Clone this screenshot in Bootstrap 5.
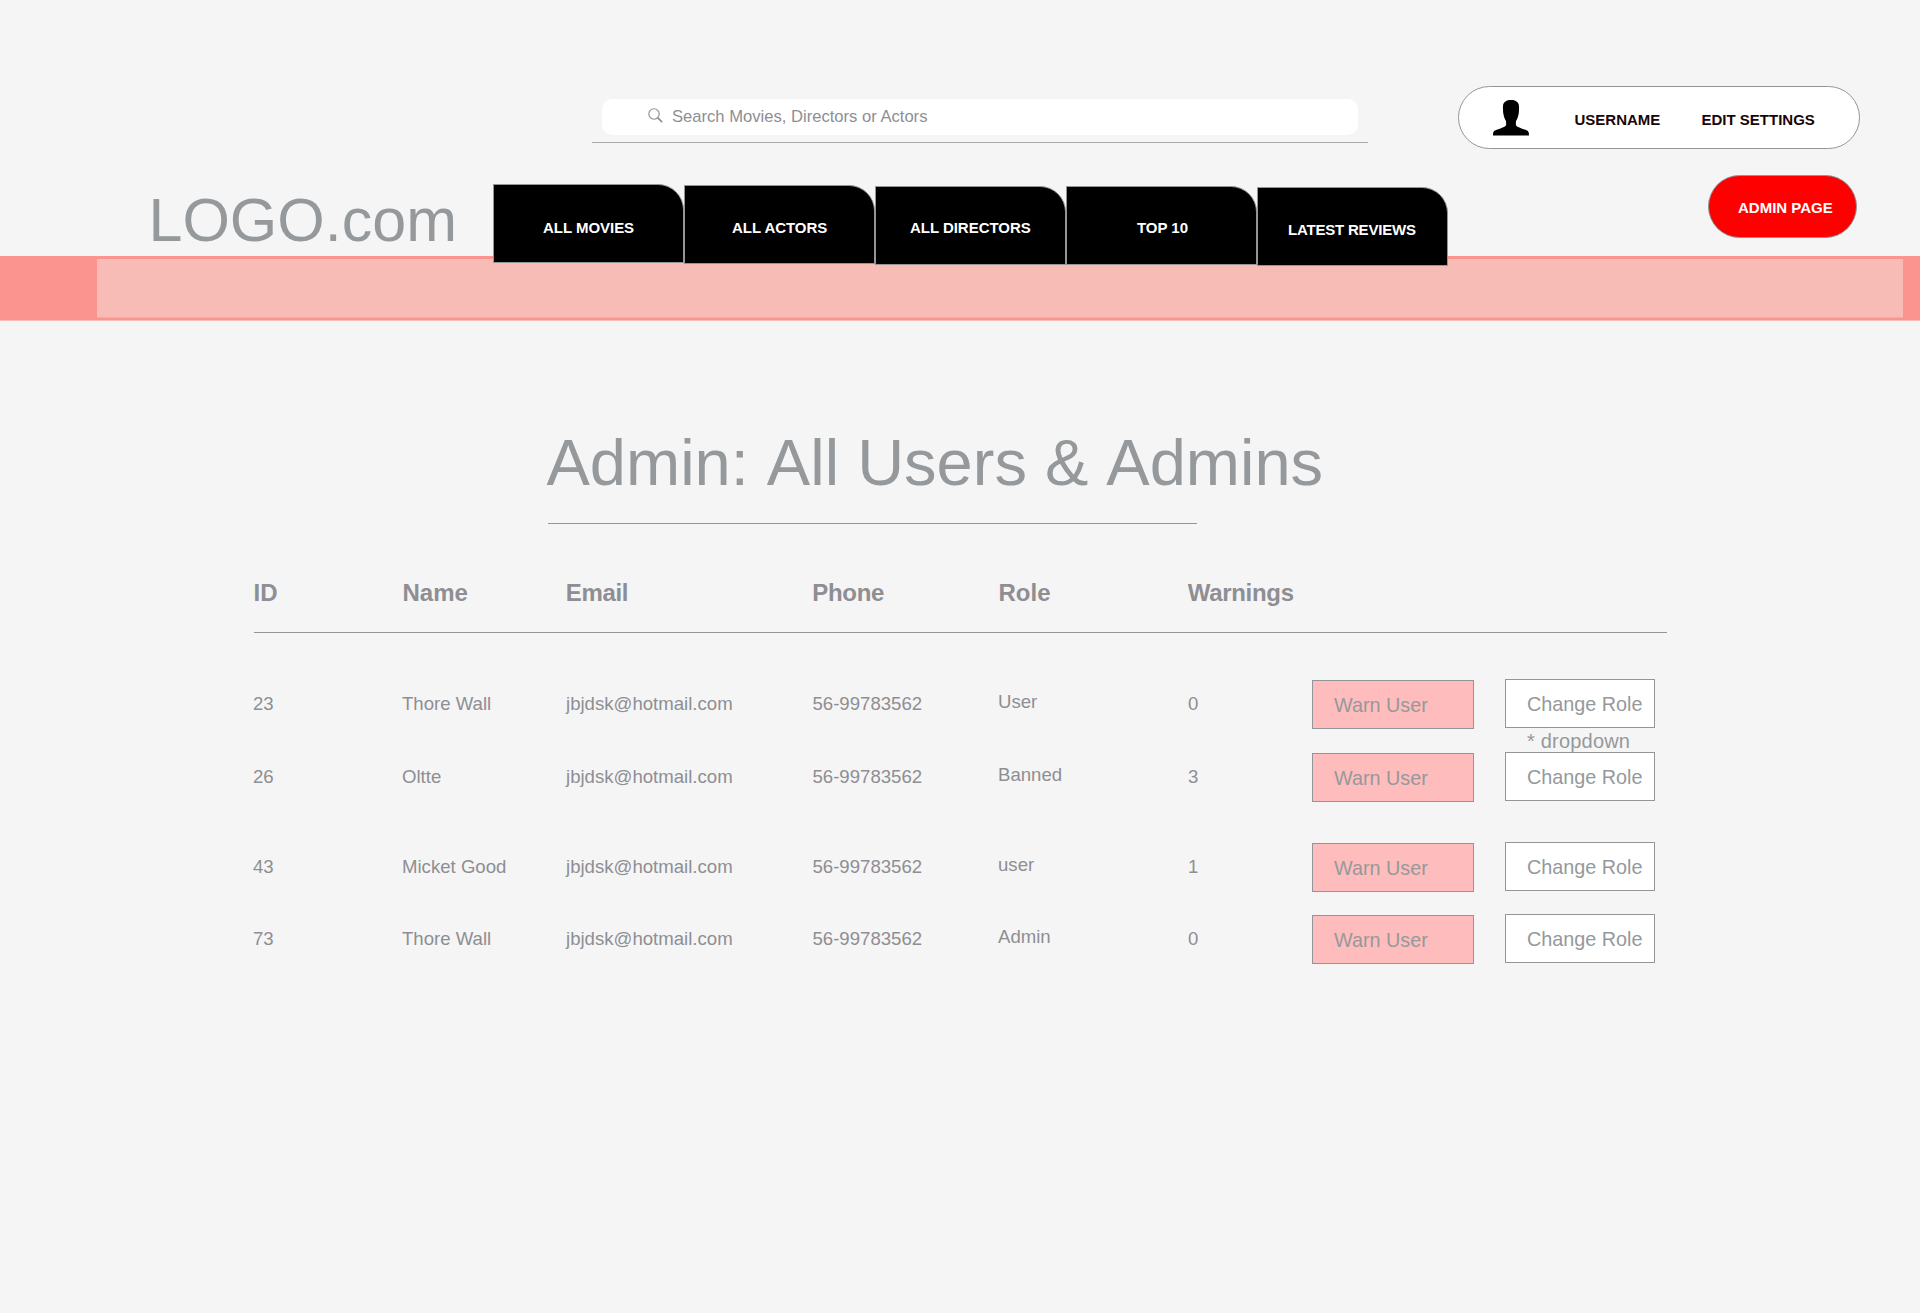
<!DOCTYPE html>
<html lang="en">
<head>
<meta charset="utf-8">
<meta name="viewport" content="width=device-width, initial-scale=1">
<title>Admin: All Users &amp; Admins</title>
<link rel="stylesheet" href="https://cdn.jsdelivr.net/npm/bootstrap@5.3.0/dist/css/bootstrap.min.css">
<style>
  body { background: #f5f5f5; font-family: "Liberation Sans", Arial, sans-serif; color: #8e8e93; min-height: 1313px; overflow-x: hidden; }
  .page { width: 1920px; }
  a { color: inherit; text-decoration: none; }
  .topline { padding: 86px 0 0 592px; height: 149px; }
  .search-wrap { width: 776px; height: 44px; margin-top: 13px; padding: 0 10px; border-bottom: 1px solid #a8a9aa; }
  .search-field { height: 36px; background: #fff; border-radius: 10px; padding-left: 46px; font-size: 16.6px; line-height: 35px; }
  .search-field svg { margin: 9px 9px 0 0; }
  .search-field input { border: 0; padding: 0; outline: 0; width: 500px; background: transparent; height: 35px; color: #8e8e93; }
  .search-field input::placeholder { color: #8e8e93; opacity: 1; }
  .user-pill { width: 402px; height: 63px; margin-left: 90px; padding-left: 34px; background: #fff; border: 1px solid #929698; font-size: 15px; color: #1a0506; line-height: 65px; }
  .user-pill svg { margin-top: 13px; }
  .user-pill .who { margin-left: 45.5px; width: 127px; }
  .midline { height: 107px; z-index: 2; }
  .brand { margin: 41px 0 0; padding-left: 148.5px; width: 493px; font-size: 61px; line-height: 60px; color: #95999b; white-space: nowrap; }
  .tabs { margin-top: 35px; }
  .tab { width: 191px; height: 79px; background: #000; color: #fff; border: 1px solid #929698; border-radius: 0 26px 0 0; font-size: 15px; letter-spacing: -.03px; line-height: 20px; padding-top: 33px; white-space: nowrap; }
  .tab-tight { letter-spacing: -.2px; }
  .admin-btn { width: 149px; height: 63px; margin: 26px 0 0 260px; padding: 0 0 0 29px; background: #f00; color: #fff; border: 1px solid #929698; font-size: 15px; line-height: 63px; }
  .band { height: 65px; background: #fb948e; border-bottom: 1px solid #f9bdb9; padding: 3px 17px 3px 96.7px; }
  .band-inner { height: 59px; background: #f8bcb7; border-bottom: 1px solid #f9a8a3; }
  .heading { margin: 103px 0 0 546.5px; font-size: 65px; font-kerning: none; line-height: 78px; color: #95999b; white-space: nowrap; }
  .heading-rule { margin: 21px 0 0 548px; width: 649px; height: 1px; background: #929698; }
  .users { margin: 51px 0 0 253px; width: 1414px; }
  .line-grid { display: grid; grid-template-columns: 149px 164px 246.5px 185.5px 190px 124px 193px 150px; }
  .users-head { font-size: 24px; font-weight: 700; line-height: 36px; height: 58px; margin-left: 1px; border-bottom: 1px solid #929698; }
  .users-head > div { margin-left: -.5px; }
  .users-head .tight { letter-spacing: -.3px; margin-left: -1.3px; }
  .user-line { height: 49px; font-size: 18.6px; line-height: 49px; margin-bottom: 24px; white-space: nowrap; }
  .role-cell { margin-top: -2px; }
  .act { height: 49px; border: 1px solid #929698; border-radius: 0; font-size: 19.8px; line-height: 48px; padding: 0 0 0 21px; text-align: left; color: #95999b; }
  .act-warn { width: 162px; margin-top: 1px; background: #ffbcbc; }
  .act-role { width: 150px; background: #fff; z-index: 1; }
  .hint { left: 22px; top: 50px; font-size: 20px; letter-spacing: .2px; line-height: 24px; color: #95999b; z-index: 0; }
</style>
<script src="https://cdn.jsdelivr.net/npm/bootstrap@5.3.0/dist/js/bootstrap.bundle.min.js"></script>
</head>
<body>
<div class="page">
  <header>
    <div class="topline d-flex align-items-start">
      <form class="search-wrap">
        <div class="search-field d-flex align-items-start">
          <svg width="15" height="15" viewBox="0 0 15 15" fill="none" stroke="#8e8e93" stroke-width="1.1"><circle cx="6" cy="6" r="5.2"/><path d="M9.8 9.8 13.700 13.700" stroke-width="1.7" stroke-linecap="round"/></svg>
          <input type="text" placeholder="Search Movies, Directors or Actors" aria-label="Search">
        </div>
      </form>
      <div class="user-pill rounded-pill d-flex align-items-start fw-bold">
        <svg width="36" height="36" viewBox="0 0 36 36" fill="#000"><path d="M18 0C22.300 0 25.700 1.800 26 6C26.100 8 26.100 9 25.900 10.500C26.100 11.500 25.800 13 25.500 14.500C24.900 17.300 24.100 19.300 23 21L22.800 25C24.500 27.700 29 28.300 33 30C35.500 31.200 36 32 36 35.500H0C0 32 .5 31.200 3 30C7 28.300 11.500 27.700 13.200 25L13 21C11.900 19.300 11.100 17.300 10.500 14.500C10.200 13 9.900 11.500 10.100 10.500C9.900 9 9.900 8 10 6C10.300 1.800 13.700 0 18 0Z"/></svg>
        <a class="who" href="#">USERNAME</a>
        <a href="#">EDIT SETTINGS</a>
      </div>
    </div>
    <div class="midline d-flex align-items-start position-relative">
      <div class="brand">LOGO.com</div>
      <nav class="tabs d-flex align-items-start fw-bold">
        <a class="tab" style="padding-left:49px" href="#">ALL MOVIES</a>
        <a class="tab" style="padding-left:47px;margin-top:1px;padding-top:32px" href="#">ALL ACTORS</a>
        <a class="tab" style="padding-left:34px;margin-top:2px;padding-top:31px" href="#">ALL DIRECTORS</a>
        <a class="tab" style="padding-left:70px;margin-top:2px;padding-top:31px" href="#">TOP 10</a>
        <a class="tab tab-tight" style="padding-left:30px;margin-top:3px;padding-top:32px" href="#">LATEST REVIEWS</a>
      </nav>
      <a class="admin-btn rounded-pill fw-bold" href="#">ADMIN PAGE</a>
    </div>
    <div class="band"><div class="band-inner"></div></div>
  </header>
  <main>
    <h1 class="heading fw-normal">Admin: All Users &amp; Admins</h1>
    <div class="heading-rule"></div>
    <section class="users">
      <div class="users-head line-grid">
        <div>ID</div><div>Name</div><div class="tight">Email</div><div class="tight">Phone</div><div>Role</div><div class="tight">Warnings</div>
      </div>
      <div class="user-line line-grid" style="margin-top:46px">
        <div>23</div><div>Thore Wall</div><div>jbjdsk@hotmail.com</div><div>56-99783562</div><div class="role-cell">User</div><div>0</div>
        <button class="btn act act-warn">Warn User</button>
        <div class="position-relative"><button class="btn act act-role position-relative d-block">Change Role</button><span class="hint position-absolute">* dropdown</span></div>
      </div>
      <div class="user-line line-grid position-relative" style="margin-bottom:41px">
        <div>26</div><div>Oltte</div><div>jbjdsk@hotmail.com</div><div>56-99783562</div><div class="role-cell">Banned</div><div>3</div>
        <button class="btn act act-warn">Warn User</button>
        <button class="btn act act-role">Change Role</button>
      </div>
      <div class="user-line line-grid" style="margin-bottom:23px">
        <div>43</div><div>Micket Good</div><div>jbjdsk@hotmail.com</div><div>56-99783562</div><div class="role-cell">user</div><div>1</div>
        <button class="btn act act-warn">Warn User</button>
        <button class="btn act act-role">Change Role</button>
      </div>
      <div class="user-line line-grid">
        <div>73</div><div>Thore Wall</div><div>jbjdsk@hotmail.com</div><div>56-99783562</div><div class="role-cell">Admin</div><div>0</div>
        <button class="btn act act-warn">Warn User</button>
        <button class="btn act act-role">Change Role</button>
      </div>
    </section>
  </main>
</div>
</body>
</html>
